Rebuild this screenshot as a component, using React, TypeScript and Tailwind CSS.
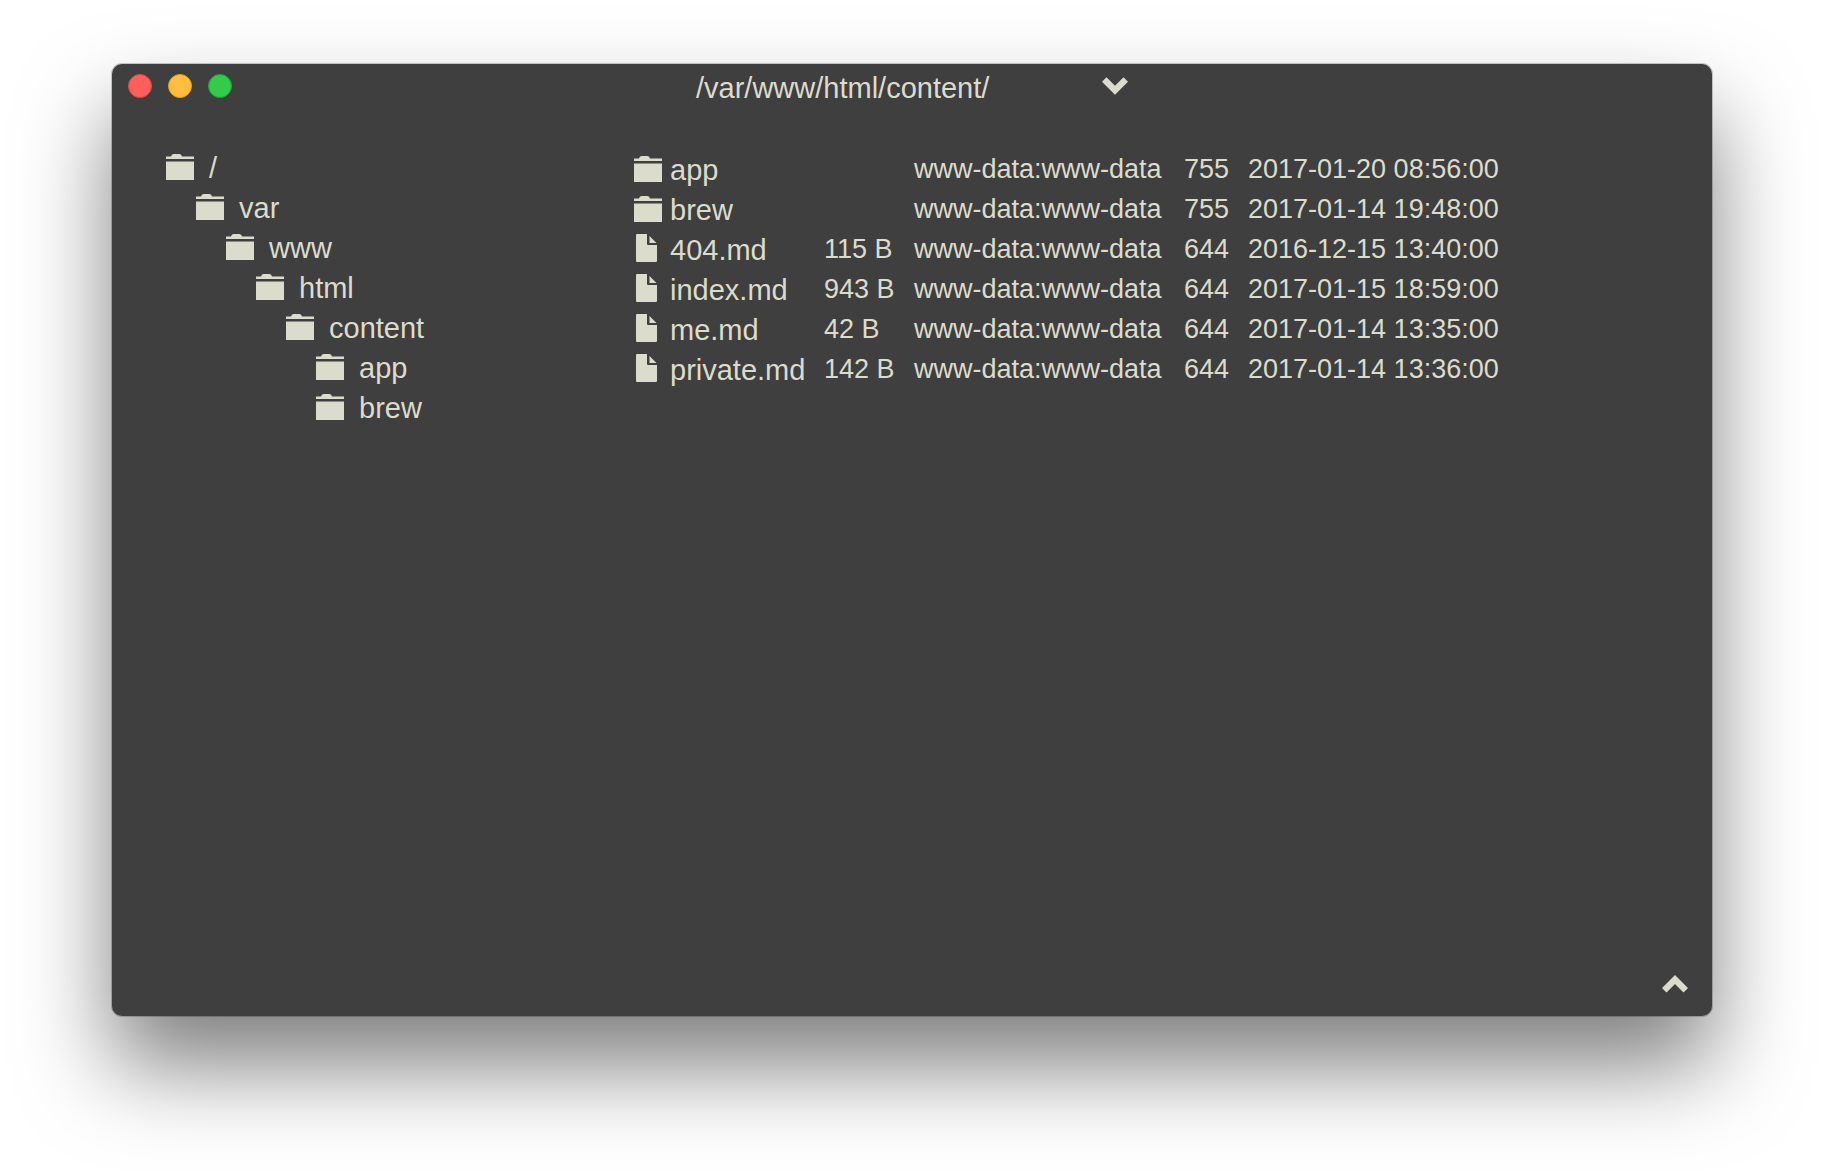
import React from "react";

const tree = [
  { name: "/", indent: "pl-0" },
  { name: "var", indent: "pl-[30px]" },
  { name: "www", indent: "pl-[60px]" },
  { name: "html", indent: "pl-[90px]" },
  { name: "content", indent: "pl-[120px]" },
  { name: "app", indent: "pl-[150px]" },
  { name: "brew", indent: "pl-[150px]" },
];

const files = [
  { name: "app", dir: true, size: "", mode: "755", date: "2017-01-20 08:56:00" },
  { name: "brew", dir: true, size: "", mode: "755", date: "2017-01-14 19:48:00" },
  { name: "404.md", dir: false, size: "115 B", mode: "644", date: "2016-12-15 13:40:00" },
  { name: "index.md", dir: false, size: "943 B", mode: "644", date: "2017-01-15 18:59:00" },
  { name: "me.md", dir: false, size: "42 B", mode: "644", date: "2017-01-14 13:35:00" },
  { name: "private.md", dir: false, size: "142 B", mode: "644", date: "2017-01-14 13:36:00" },
];

function FolderIcon() {
  return (
    <svg viewBox="0 0 28 28" fill="currentColor" aria-hidden="true" className="size-7 shrink-0">
      <path d="M0 4.500h5Q5.500 2 7.500 2h6q2 0 2.500 2.500h12V7H0zM0 9.500h28V28H0z" />
    </svg>
  );
}

function FileIcon() {
  return (
    <svg viewBox="0 0 28 28" fill="currentColor" aria-hidden="true" className="size-7 shrink-0">
      <path d="M3 0h10v10q0 1 1 1h9v16q0 1-1 1H3q-1 0-1-1V1q0-1 1-1zM15.500 2l7 7h-7z" />
    </svg>
  );
}

function Chevron({ up = false }: { up?: boolean }) {
  return (
    <svg viewBox="0 0 26 18" fill="currentColor" aria-hidden="true" className="block h-[18px] w-[26px]">
      <path d={up ? "M13 0L26 13l-4.500 4.500L13 9l-8.500 8.500L0 13z" : "M4.500 .3L13 8.800 21.500 .3 26 4.800l-13 13-13-13z"} />
    </svg>
  );
}

export default function App() {
  return (
    <div className="flex min-h-screen flex-col bg-white px-28 pt-16 pb-40 font-['Liberation_Sans',Arial,sans-serif] text-[#dcdccc]">
      <main className="flex grow flex-col rounded-[10px] bg-[#3f3f3f] shadow-[0_0_0_1px_rgba(0,0,0,0.2),0_50px_90px_rgba(0,0,0,0.5)]">
        {/* Title bar */}
        <header className="grid h-11 grid-cols-[1fr_432px_1fr] items-center px-4">
          <div className="flex gap-4">
            <button aria-label="Close" className="size-6 rounded-full border border-[#e2463f] bg-[#ff5f5b]" />
            <button aria-label="Minimize" className="size-6 rounded-full border border-[#e1a116] bg-[#ffbe40]" />
            <button aria-label="Zoom" className="size-6 rounded-full border border-[#12ac28] bg-[#34ca4a]" />
          </div>
          <div className="flex items-center justify-between">
            <h1 className="pt-1 text-[29px] leading-10">/var/www/html/content/</h1>
            <button aria-label="Show path history">
              <Chevron />
            </button>
          </div>
        </header>

        <div className="flex grow pt-10 pl-[54px]">
          {/* Directory tree */}
          <ul className="w-[468px] shrink-0">
            {tree.map((node, i) => (
              <li key={i} className={node.indent}>
                <a href="#" className="flex h-10 items-center gap-[15px] text-[29px] leading-10">
                  <span className="pb-1">
                    <FolderIcon />
                  </span>
                  {node.name}
                </a>
              </li>
            ))}
          </ul>

          {/* Directory contents */}
          <div>
            <table className="table-fixed text-left text-[27px] leading-9 whitespace-nowrap">
              <colgroup>
                <col className="w-[190px]" />
                <col className="w-[90px]" />
                <col className="w-[270px]" />
                <col className="w-16" />
                <col className="w-64" />
              </colgroup>
              <tbody>
                {files.map((file) => (
                  <tr key={file.name} className="h-10">
                    <td className="p-0">
                      <a href="#" className="flex h-10 items-center gap-2 text-[29px]">
                        {file.dir ? <FolderIcon /> : <FileIcon />}
                        <span className="pt-1">{file.name}</span>
                      </a>
                    </td>
                    <td className="pt-0.5">{file.size}</td>
                    <td className="pt-0.5">www-data:www-data</td>
                    <td className="pt-0.5">{file.mode}</td>
                    <td className="pt-0.5">{file.date}</td>
                  </tr>
                ))}
              </tbody>
            </table>
          </div>
        </div>

        <footer className="flex justify-end px-6 pb-[23px]">
          <button aria-label="Show terminal">
            <Chevron up />
          </button>
        </footer>
      </main>
    </div>
  );
}
